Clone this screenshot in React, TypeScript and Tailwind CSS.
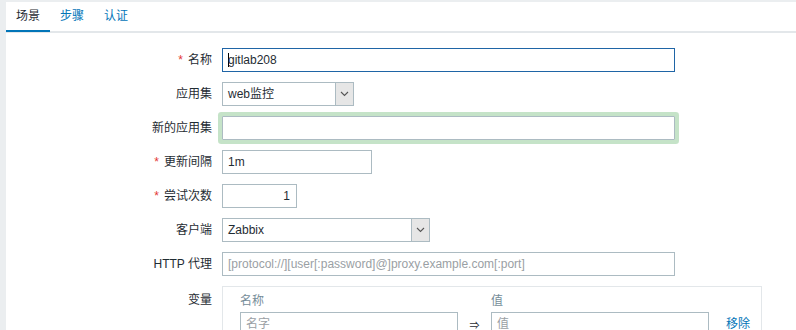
import React from 'react';

const FONT = '"Liberation Sans", Arial, "Noto Sans CJK SC", sans-serif';

function Label({ text, required }: { text: string; required?: boolean }) {
  return (
    <div className="w-[206px] shrink-0 text-right leading-[24px] h-[24px] text-[#1f2c33]">
      {required && <span className="text-[#e33734] mr-[5px]">*</span>}
      {text}
    </div>
  );
}

function Chevron() {
  return (
    <svg width="9" height="6" viewBox="0 0 9 6" fill="none">
      <path d="M1 1l3.5 3.5L8 1" stroke="#555" strokeWidth="1.1" />
    </svg>
  );
}

function Select({ value, width }: { value: string; width: string }) {
  return (
    <div className={`${width} h-[24px] flex border border-[#acbbc2] bg-white`}>
      <div className="flex-1 pl-[5px] leading-[22px] text-[#1f2c33]">{value}</div>
      <div className="w-[18px] h-full bg-[#e6e6e6] border-l border-[#acbbc2] flex items-center justify-center">
        <Chevron />
      </div>
    </div>
  );
}

export default function App() {
  return (
    <div className="w-[796px] h-[330px] bg-[#ebeef0] pl-[6px] pt-[2px] overflow-hidden text-[12px]" style={{ fontFamily: FONT }}>
      <div className="bg-white h-full">
        {/* tabs */}
        <div className="flex h-[31px] border-b-2 border-[#e3e7ea]">
          <div className="px-[10px] leading-[28px] text-[#1f2c33] border-b-2 border-[#0275b8] -mb-[2px] h-[30px]">场景</div>
          <div className="px-[10px] leading-[28px] text-[#0275b8]">步骤</div>
          <div className="px-[10px] leading-[28px] text-[#0275b8]">认证</div>
        </div>

        <div className="pt-[15px] flex flex-col gap-[10px]">
          <div className="flex gap-[10px]">
            <Label text="名称" required />
            <div className="w-[453px] h-[24px] border border-[#1f65a6] flex items-center pl-[5px] text-[#1f2c33]">
              <span className="w-px h-[14px] bg-black -mr-px" />
              gitlab208
            </div>
          </div>

          <div className="flex gap-[10px]">
            <Label text="应用集" />
            <Select value="web监控" width="w-[132px]" />
          </div>

          <div className="flex gap-[10px]">
            <Label text="新的应用集" />
            <div className="w-[453px] h-[24px] border border-[#acbbc2] bg-white shadow-[0_0_0_4px_#c5e3c8] rounded-[1px]" />
          </div>

          <div className="flex gap-[10px]">
            <Label text="更新间隔" required />
            <div className="w-[150px] h-[24px] border border-[#acbbc2] pl-[5px] leading-[22px] text-[#1f2c33]">1m</div>
          </div>

          <div className="flex gap-[10px]">
            <Label text="尝试次数" required />
            <div className="w-[75px] h-[24px] border border-[#acbbc2] pr-[6px] text-right leading-[22px] text-[#1f2c33]">1</div>
          </div>

          <div className="flex gap-[10px]">
            <Label text="客户端" />
            <Select value="Zabbix" width="w-[208px]" />
          </div>

          <div className="flex gap-[10px]">
            <Label text="HTTP 代理" />
            <div className="w-[453px] h-[24px] border border-[#acbbc2] pl-[5px] leading-[22px] text-[#9aa0a4] whitespace-nowrap overflow-hidden">
              [protocol://][user[:password]@]proxy.example.com[:port]
            </div>
          </div>

          <div className="flex gap-[10px]">
            <div className="w-[206px] shrink-0 text-right pt-[5px] text-[#1f2c33]">变量</div>
            <div className="w-[540px] border border-[#e3e7ea] px-[17px] pt-[6px] pb-[6px]">
              <div className="flex text-[#768d99] leading-[16px]">
                <div className="w-[251px]">名称</div>
                <div>值</div>
              </div>
              <div className="flex items-center mt-[3px] whitespace-nowrap">
                <div className="w-[218px] shrink-0 h-[24px] border border-[#acbbc2] pl-[5px] leading-[22px] text-[#9aa0a4]">名字</div>
                <div className="w-[33px] shrink-0 text-center text-[10px] pt-[3px] text-[#1f2c33]">⇒</div>
                <div className="w-[218px] shrink-0 h-[24px] border border-[#acbbc2] pl-[5px] leading-[22px] text-[#9aa0a4]">值</div>
                <div className="ml-[17px] shrink-0 text-[#0275b8]">移除</div>
              </div>
            </div>
          </div>
        </div>
      </div>
    </div>
  );
}
